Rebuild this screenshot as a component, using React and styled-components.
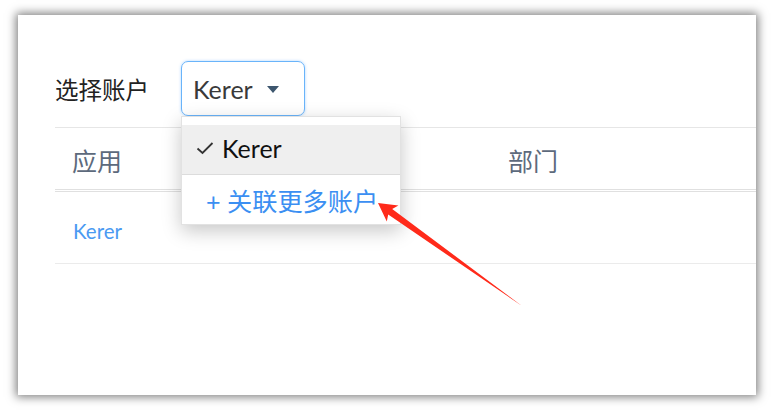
import React from "react";
import styled, { createGlobalStyle } from "styled-components";

const Global = createGlobalStyle`
  html, body { margin: 0; padding: 0; background: #ffffff; }
  body { font-family: Lato, "Noto Sans CJK SC", sans-serif; }
  * { box-sizing: border-box; }
`;

const Page = styled.div`
  position: relative;
  width: 774px;
  height: 410px;
  padding: 15px 18px;
  background: #ffffff;
`;

const Card = styled.div`
  position: relative;
  width: 738px;
  height: 380px;
  background: #fff;
  box-shadow: 0 0 9px 2px rgba(0, 0, 0, 0.5);
  padding: 46px 0 0 37px;
`;

const Toolbar = styled.div`
  position: relative;
  display: flex;
  align-items: center;
  height: 55px;
`;

const Label = styled.span`
  font-size: 23.5px;
  color: #222;
  width: 126px;
  flex: none;
`;

const Select = styled.div`
  width: 124px;
  height: 55px;
  border: 1px solid #6ab4fa;
  border-radius: 7px;
  box-shadow: 0 0 3px rgba(64, 158, 255, 0.45);
  display: flex;
  align-items: center;
  padding-left: 11px;
  gap: 14px;
  font-size: 25px;
  color: #3a3a3a;
`;

const Caret = styled.span`
  width: 0;
  height: 0;
  border-left: 6px solid transparent;
  border-right: 6px solid transparent;
  border-top: 7px solid #3d566e;
  margin-top: 2px;
`;

const Menu = styled.div`
  position: absolute;
  top: 55px;
  left: 126px;
  width: 220px;
  background: #fff;
  border: 1px solid #e2e2e2;
  box-shadow: 0 6px 18px rgba(0, 0, 0, 0.22);
  padding-top: 8px;
  z-index: 2;
`;

const Item = styled.div`
  height: ${(p) => p.$h}px;
  display: flex;
  align-items: center;
  background: ${(p) => (p.$active ? "#efefef" : "#fff")};
  border-bottom: ${(p) => (p.$divider ? "1px solid #dcdcdc" : "none")};
  padding-left: ${(p) => p.$pl}px;
  padding-bottom: ${(p) => p.$pb || 0}px;
  font-size: ${(p) => p.$fs}px;
  color: ${(p) => p.$color};
  gap: 8px;
  white-space: nowrap;
`;

const Table = styled.div`
  margin-top: 11px;
  border-top: 1px solid #e6e6e6;
`;

const HeadRow = styled.div`
  display: grid;
  grid-template-columns: 436px 1fr;
  height: 64px;
  align-items: center;
  border-bottom: 3px double #e0e0e0;
`;

const BodyRow = styled.div`
  display: grid;
  grid-template-columns: 436px 1fr;
  height: 72px;
  align-items: center;
  border-bottom: 1px solid #ebebeb;
`;

const HeadCell = styled.div`
  padding-left: 17px;
  font-size: 25px;
  color: #5d6a7c;
  padding-top: 2px;
`;

const Cell = styled.div`
  padding-left: 18px;
  font-size: 20.5px;
  color: #4a9af2;
  padding-top: 6px;
`;

const Arrow = styled.svg`
  position: absolute;
  left: 0;
  top: 0;
  width: 774px;
  height: 410px;
  pointer-events: none;
  z-index: 5;
`;

export default function App() {
  return (
    <>
      <Global />
      <Page>
        <Card>
          <Toolbar>
            <Label>选择账户</Label>
            <Select>
              <span>Kerer</span>
              <Caret />
            </Select>
            <Menu>
              <Item $active $divider $h={50} $pl={14} $pb={3} $fs={25} $color="#111">
                <svg width="18" height="14" viewBox="0 0 18 14">
                  <path d="M1.5 7.5 L6.5 12 L16.5 2" fill="none" stroke="#333" strokeWidth="1.8" />
                </svg>
                <span>Kerer</span>
              </Item>
              <Item $h={49} $pl={24} $fs={25.2} $color="#3b8ff2">
                + 关联更多账户
              </Item>
            </Menu>
          </Toolbar>
          <Table>
            <HeadRow>
              <HeadCell>应用</HeadCell>
              <HeadCell>部门</HeadCell>
            </HeadRow>
            <BodyRow>
              <Cell>Kerer</Cell>
              <Cell />
            </BodyRow>
          </Table>
        </Card>
        <Arrow viewBox="0 0 774 410">
          <polygon
            points="378,203 398.4,205.4 392.2,208.9 522,306 388.2,214.5 386.8,221.6"
            fill="#ff2a1a"
          />
        </Arrow>
      </Page>
    </>
  );
}
